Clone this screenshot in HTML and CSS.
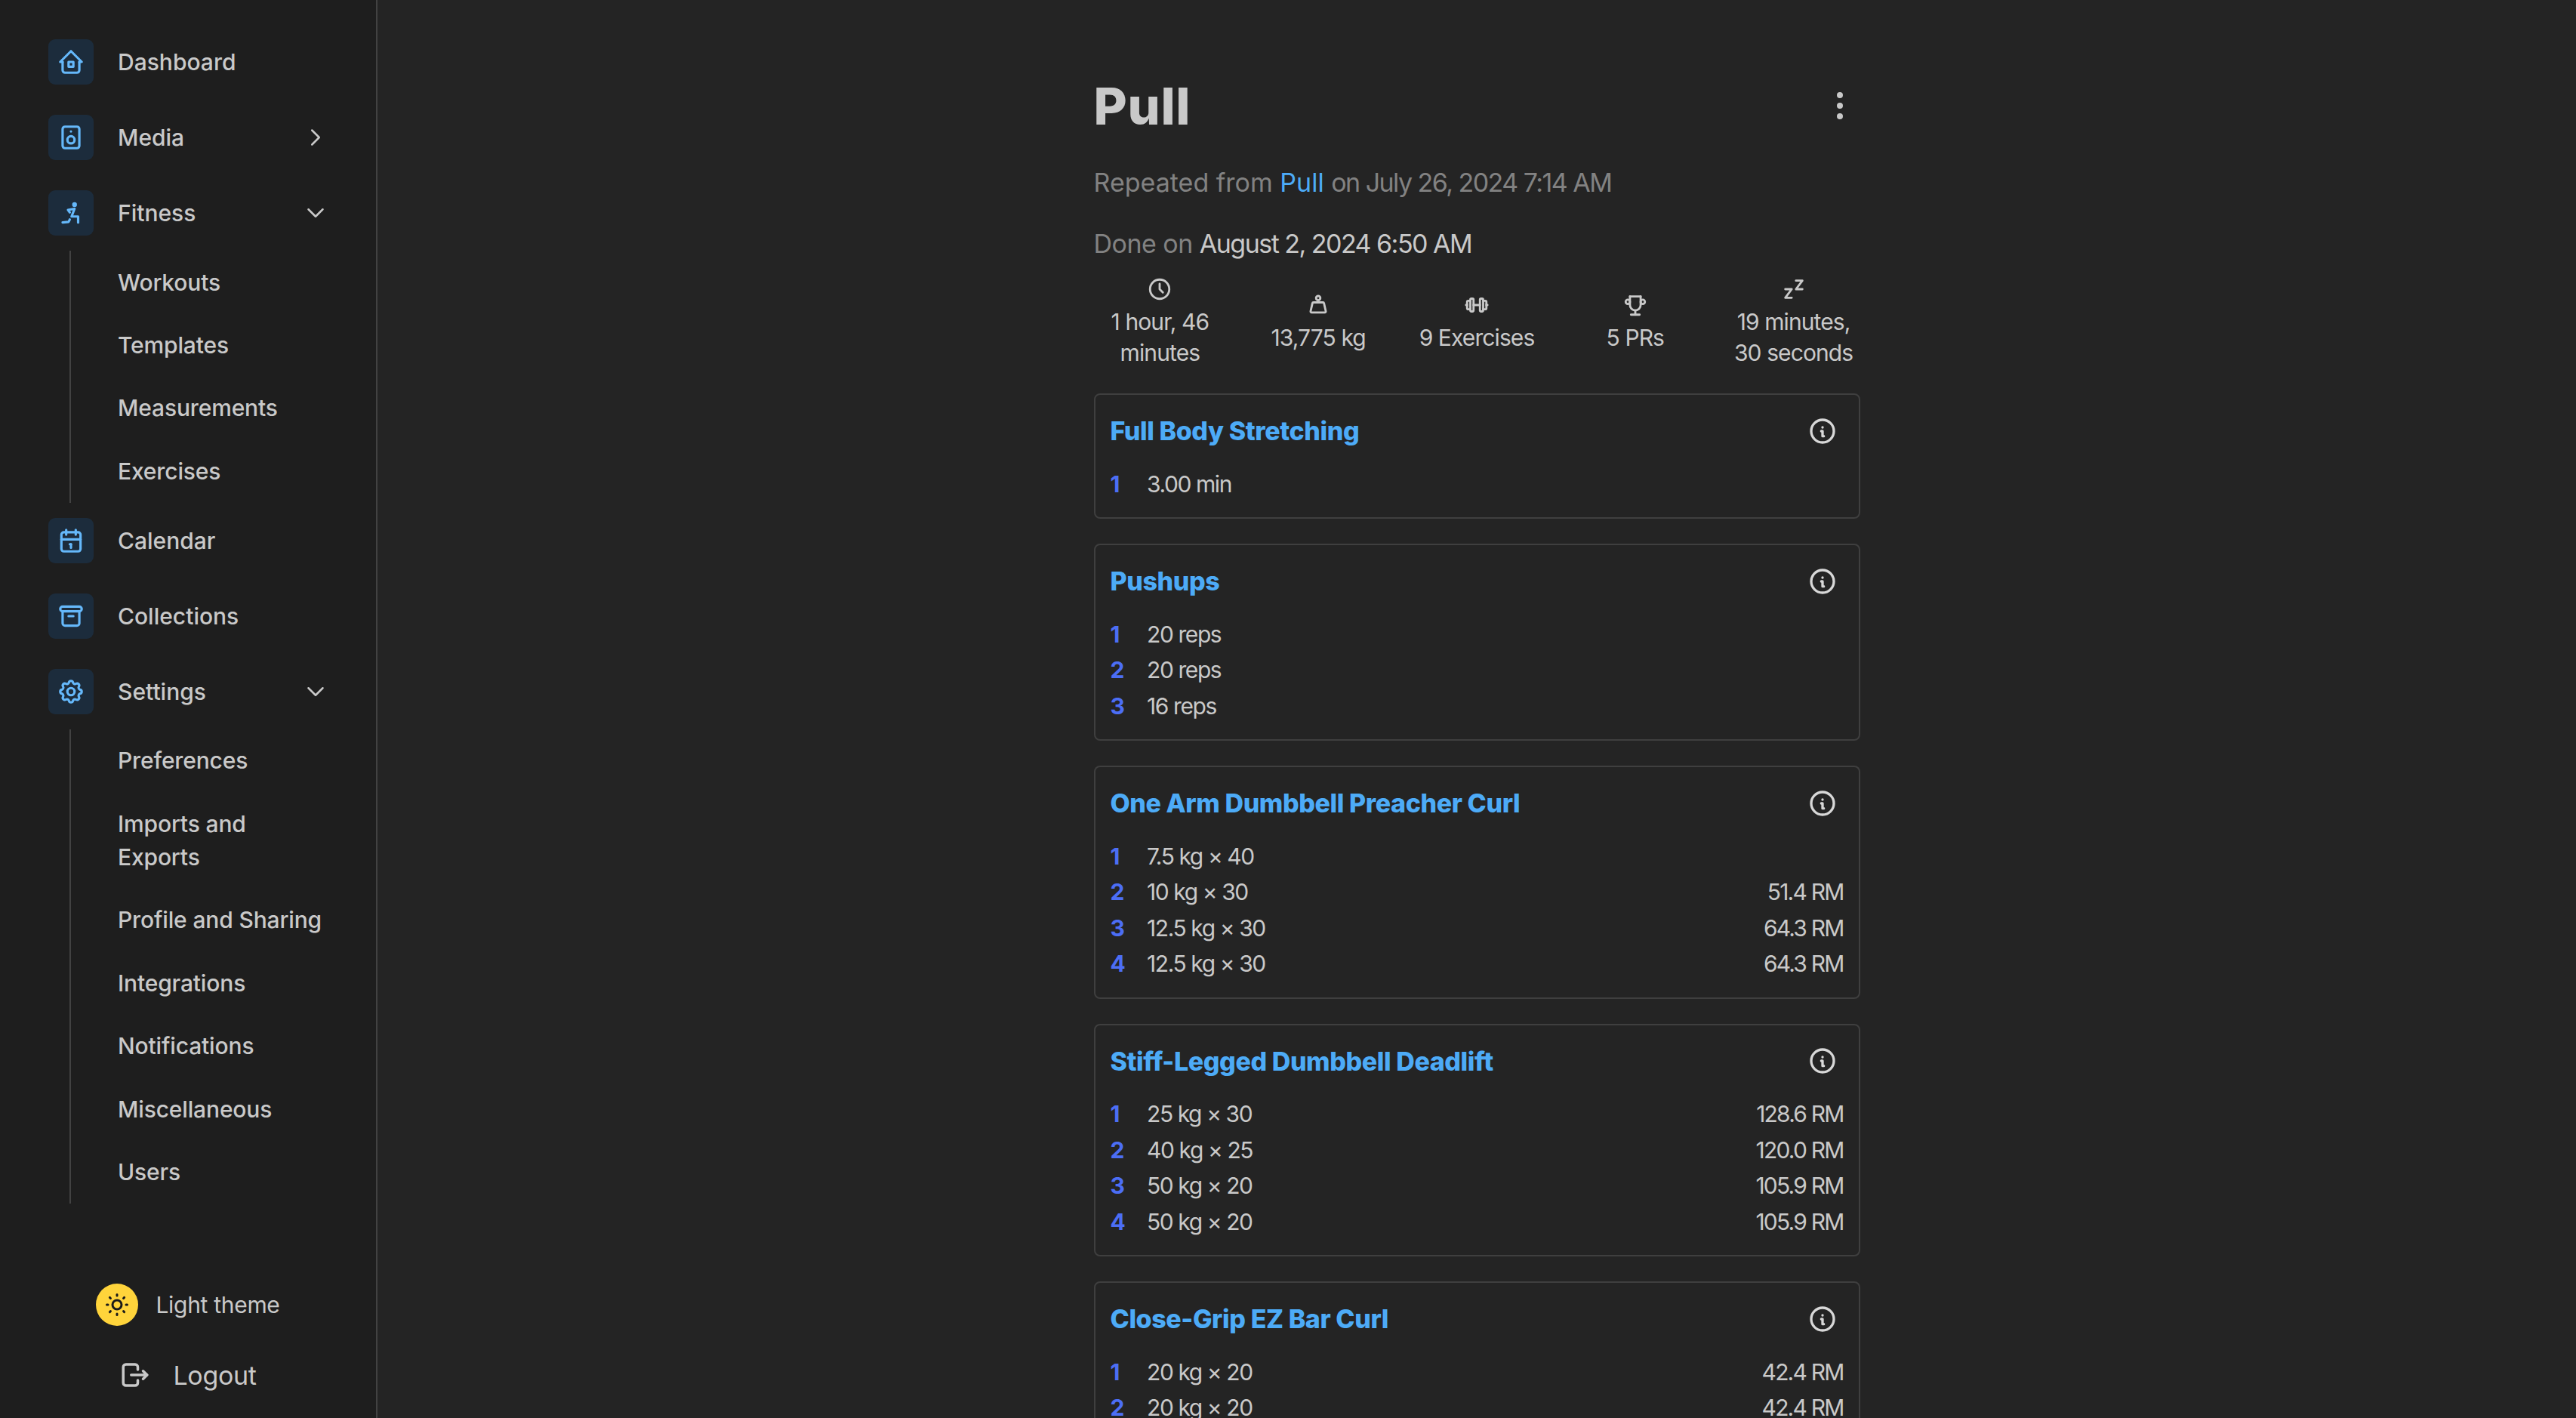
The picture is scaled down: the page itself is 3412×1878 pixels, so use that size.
FILE: index.html
```html
<!DOCTYPE html>
<html lang="en">
<head>
    <meta charset="UTF-8">
    <meta name="viewport" content="width=device-width, initial-scale=1.0">
    <title>Pull - Workout</title>
    <link rel="stylesheet" href="styles.css">
</head>
<body>
    <svg class="sprite" xmlns="http://www.w3.org/2000/svg">
        <symbol id="i-home" viewBox="0 0 24 24"><path d="M5 12l-2 0l9 -9l9 9l-2 0"/><path d="M5 12v7a2 2 0 0 0 2 2h10a2 2 0 0 0 2 -2v-7"/><path d="M10 12h4v4h-4z"/></symbol>
        <symbol id="i-speaker" viewBox="0 0 24 24"><path d="M5 5a2 2 0 0 1 2 -2h10a2 2 0 0 1 2 2v14a2 2 0 0 1 -2 2h-10a2 2 0 0 1 -2 -2z"/><path d="M9 14a3 3 0 1 0 6 0a3 3 0 1 0 -6 0"/><path d="M12 7l0 .01"/></symbol>
        <symbol id="i-stretch" viewBox="0 0 24 24"><path d="M14 5a1 1 0 1 0 2 0a1 1 0 1 0 -2 0"/><path d="M5 20l5 -.5l1 -2"/><path d="M18 20v-5h-5.5l2.5 -6.5l-5.5 1l1.5 2"/></symbol>
        <symbol id="i-calendar" viewBox="0 0 24 24"><path d="M4 7a2 2 0 0 1 2 -2h12a2 2 0 0 1 2 2v12a2 2 0 0 1 -2 2h-12a2 2 0 0 1 -2 -2v-12z"/><path d="M16 3v4"/><path d="M8 3v4"/><path d="M4 11h16"/><path d="M11 15h1"/><path d="M12 15v3"/></symbol>
        <symbol id="i-archive" viewBox="0 0 24 24"><path d="M3 6a2 2 0 0 1 2 -2h14a2 2 0 0 1 2 2a2 2 0 0 1 -2 2h-14a2 2 0 0 1 -2 -2z"/><path d="M5 8v10a2 2 0 0 0 2 2h10a2 2 0 0 0 2 -2v-10"/><path d="M10 12l4 0"/></symbol>
        <symbol id="i-settings" viewBox="0 0 24 24"><path d="M10.325 4.317c.426 -1.756 2.924 -1.756 3.35 0a1.724 1.724 0 0 0 2.573 1.066c1.543 -.94 3.31 .826 2.37 2.37a1.724 1.724 0 0 0 1.065 2.572c1.756 .426 1.756 2.924 0 3.35a1.724 1.724 0 0 0 -1.066 2.573c.94 1.543 -.826 3.31 -2.37 2.37a1.724 1.724 0 0 0 -2.572 1.065c-.426 1.756 -2.924 1.756 -3.35 0a1.724 1.724 0 0 0 -2.573 -1.066c-1.543 .94 -3.31 -.826 -2.37 -2.37a1.724 1.724 0 0 0 -1.065 -2.572c-1.756 -.426 -1.756 -2.924 0 -3.35a1.724 1.724 0 0 0 1.066 -2.573c-.94 -1.543 .826 -3.31 2.37 -2.37c1 .608 2.296 .07 2.572 -1.065z"/><path d="M9 12a3 3 0 1 0 6 0a3 3 0 1 0 -6 0"/></symbol>
        <symbol id="i-right" viewBox="0 0 24 24"><path d="M9 6l6 6l-6 6"/></symbol>
        <symbol id="i-down" viewBox="0 0 24 24"><path d="M6 9l6 6l6 -6"/></symbol>
        <symbol id="i-sun" viewBox="0 0 24 24"><path d="M8 12a4 4 0 1 0 8 0a4 4 0 1 0 -8 0"/><path d="M3 12h1m8 -9v1m8 8h1m-9 8v1m-6.4 -15.4l.7 .7m12.1 -.7l-.7 .7m0 11.4l.7 .7m-12.1 -.7l-.7 .7"/></symbol>
        <symbol id="i-logout" viewBox="0 0 24 24"><path d="M14 8v-2a2 2 0 0 0 -2 -2h-7a2 2 0 0 0 -2 2v12a2 2 0 0 0 2 2h7a2 2 0 0 0 2 -2v-2"/><path d="M9 12h12l-3 -3"/><path d="M18 15l3 -3"/></symbol>
        <symbol id="i-dots" viewBox="0 0 24 24"><path d="M11 12a1 1 0 1 0 2 0a1 1 0 1 0 -2 0"/><path d="M11 19a1 1 0 1 0 2 0a1 1 0 1 0 -2 0"/><path d="M11 5a1 1 0 1 0 2 0a1 1 0 1 0 -2 0"/></symbol>
        <symbol id="i-clock" viewBox="0 0 24 24"><path d="M3 12a9 9 0 1 0 18 0a9 9 0 0 0 -18 0"/><path d="M12 7v5l3 3"/></symbol>
        <symbol id="i-weight" viewBox="0 0 24 24"><path d="M10 5.5a2 2 0 1 0 4 0a2 2 0 1 0 -4 0"/><path d="M7.6 9.5h8.8a1 1 0 0 1 1 .8l1.7 7.5a1 1 0 0 1 -1 1.2h-12.2a1 1 0 0 1 -1 -1.2l1.7 -7.5a1 1 0 0 1 1 -.8z"/></symbol>
        <symbol id="i-barbell" viewBox="0 0 24 24"><path d="M2 12h1"/><path d="M6 8h-2a1 1 0 0 0 -1 1v6a1 1 0 0 0 1 1h2"/><path d="M6 7v10a1 1 0 0 0 1 1h1a1 1 0 0 0 1 -1v-10a1 1 0 0 0 -1 -1h-1a1 1 0 0 0 -1 1z"/><path d="M9 12h6"/><path d="M15 7v10a1 1 0 0 0 1 1h1a1 1 0 0 0 1 -1v-10a1 1 0 0 0 -1 -1h-1a1 1 0 0 0 -1 1z"/><path d="M18 8h2a1 1 0 0 1 1 1v6a1 1 0 0 1 -1 1h-2"/><path d="M22 12h-1"/></symbol>
        <symbol id="i-trophy" viewBox="0 0 24 24"><path d="M8 21l8 0"/><path d="M12 17l0 4"/><path d="M7 4l10 0"/><path d="M17 4v8a5 5 0 0 1 -10 0v-8"/><path d="M3 9a2 2 0 1 0 4 0a2 2 0 1 0 -4 0"/><path d="M17 9a2 2 0 1 0 4 0a2 2 0 1 0 -4 0"/></symbol>
        <symbol id="i-zzz" viewBox="0 0 24 24"><path d="M4 12h6l-6 8h6"/><path d="M14 4h6l-6 8h6"/></symbol>
        <symbol id="i-info" viewBox="0 0 24 24"><path d="M3 12a9 9 0 1 0 18 0a9 9 0 0 0 -18 0"/><path d="M12 9h.01"/><path d="M11 12h1v4h1"/></symbol>
    </svg>

    <aside class="sidebar">
        <nav class="nav">
            <a class="nav-row"><span class="nav-icon"><svg class="icon"><use href="#i-home"/></svg></span><span class="nav-label">Dashboard</span></a>
            <a class="nav-row"><span class="nav-icon"><svg class="icon"><use href="#i-speaker"/></svg></span><span class="nav-label">Media</span><svg class="icon chevron"><use href="#i-right"/></svg></a>
            <a class="nav-row"><span class="nav-icon"><svg class="icon"><use href="#i-stretch"/></svg></span><span class="nav-label">Fitness</span><svg class="icon chevron"><use href="#i-down"/></svg></a>
            <div class="sub-list">
                <a class="sub-row">Workouts</a>
                <a class="sub-row">Templates</a>
                <a class="sub-row">Measurements</a>
                <a class="sub-row">Exercises</a>
            </div>
            <a class="nav-row"><span class="nav-icon"><svg class="icon"><use href="#i-calendar"/></svg></span><span class="nav-label">Calendar</span></a>
            <a class="nav-row"><span class="nav-icon"><svg class="icon"><use href="#i-archive"/></svg></span><span class="nav-label">Collections</span></a>
            <a class="nav-row"><span class="nav-icon"><svg class="icon"><use href="#i-settings"/></svg></span><span class="nav-label">Settings</span><svg class="icon chevron"><use href="#i-down"/></svg></a>
            <div class="sub-list">
                <a class="sub-row">Preferences</a>
                <a class="sub-row">Imports and<br>Exports</a>
                <a class="sub-row">Profile and Sharing</a>
                <a class="sub-row">Integrations</a>
                <a class="sub-row">Notifications</a>
                <a class="sub-row">Miscellaneous</a>
                <a class="sub-row">Users</a>
            </div>
        </nav>
        <div class="sidebar-foot">
            <div class="theme-row">
                <span class="theme-dot"><svg class="icon sun"><use href="#i-sun"/></svg></span>
                <span>Light theme</span>
            </div>
            <div class="logout-row">
                <svg class="icon logout"><use href="#i-logout"/></svg>
                <span>Logout</span>
            </div>
        </div>
    </aside>

    <main class="main">
        <div class="workout">
            <div class="title-row">
                <h1>Pull</h1>
                <svg class="icon dots"><use href="#i-dots"/></svg>
            </div>
            <p class="meta repeated">Repeated from <a class="link">Pull</a> <span class="date">on July 26, 2024 7:14 AM</span></p>
            <p class="meta done">Done on <span class="date strong">August 2, 2024 6:50 AM</span></p>

            <div class="stats">
                <div class="stat"><svg class="icon"><use href="#i-clock"/></svg><span>1 hour, 46 minutes</span></div>
                <div class="stat"><svg class="icon"><use href="#i-weight"/></svg><span>13,775 kg</span></div>
                <div class="stat"><svg class="icon"><use href="#i-barbell"/></svg><span>9 Exercises</span></div>
                <div class="stat"><svg class="icon"><use href="#i-trophy"/></svg><span>5 PRs</span></div>
                <div class="stat"><svg class="icon"><use href="#i-zzz"/></svg><span>19 minutes, 30 seconds</span></div>
            </div>

            <section class="card">
                <header class="card-head"><a class="card-title">Full Body Stretching</a><svg class="icon info"><use href="#i-info"/></svg></header>
                <div class="set"><b>1</b><span>3.00 min</span></div>
            </section>

            <section class="card">
                <header class="card-head"><a class="card-title">Pushups</a><svg class="icon info"><use href="#i-info"/></svg></header>
                <div class="set"><b>1</b><span>20 reps</span></div>
                <div class="set"><b>2</b><span>20 reps</span></div>
                <div class="set"><b>3</b><span>16 reps</span></div>
            </section>

            <section class="card">
                <header class="card-head"><a class="card-title">One Arm Dumbbell Preacher Curl</a><svg class="icon info"><use href="#i-info"/></svg></header>
                <div class="set"><b>1</b><span>7.5 kg × 40</span></div>
                <div class="set"><b>2</b><span>10 kg × 30</span><em>51.4 RM</em></div>
                <div class="set"><b>3</b><span>12.5 kg × 30</span><em>64.3 RM</em></div>
                <div class="set"><b>4</b><span>12.5 kg × 30</span><em>64.3 RM</em></div>
            </section>

            <section class="card">
                <header class="card-head"><a class="card-title">Stiff-Legged Dumbbell Deadlift</a><svg class="icon info"><use href="#i-info"/></svg></header>
                <div class="set"><b>1</b><span>25 kg × 30</span><em>128.6 RM</em></div>
                <div class="set"><b>2</b><span>40 kg × 25</span><em>120.0 RM</em></div>
                <div class="set"><b>3</b><span>50 kg × 20</span><em>105.9 RM</em></div>
                <div class="set"><b>4</b><span>50 kg × 20</span><em>105.9 RM</em></div>
            </section>

            <section class="card">
                <header class="card-head"><a class="card-title">Close-Grip EZ Bar Curl</a><svg class="icon info"><use href="#i-info"/></svg></header>
                <div class="set"><b>1</b><span>20 kg × 20</span><em>42.4 RM</em></div>
                <div class="set"><b>2</b><span>20 kg × 20</span><em>42.4 RM</em></div>
            </section>
        </div>
    </main>
</body>
</html>
```

FILE: styles.css
```css
* {
    box-sizing: border-box;
}
html, body {
    height: 100%;
}
body {
    margin: 0;
    display: flex;
    overflow: hidden;
    font-family: Inter, "Noto Sans", sans-serif;
    font-size: 30px;
    color: #c9c9c9;
    background-color: #242424;
}
.sprite {
    position: absolute;
    width: 0;
    height: 0;
}
.icon {
    width: 38px;
    height: 38px;
    fill: none;
    stroke: currentColor;
    stroke-width: 2;
    stroke-linecap: round;
    stroke-linejoin: round;
    flex: none;
}

/* sidebar */
.sidebar {
    width: 500px;
    height: 100%;
    flex: none;
    display: flex;
    flex-direction: column;
    background-color: #1e1e1e;
    border-right: 2px solid #424242;
    padding-top: 32px;
}
.nav {
    padding: 0 34px 0 64px;
}
.nav-row {
    display: flex;
    align-items: center;
    padding: 20px 0;
}
.nav-icon {
    width: 60px;
    height: 60px;
    flex: none;
    display: flex;
    align-items: center;
    justify-content: center;
    border-radius: 9px;
    background-color: #1c2c3c;
    color: #65b8fa;
}
.nav-label {
    margin-left: 32px;
    font-weight: 500;
}
.chevron {
    margin-left: auto;
    margin-right: 27px;
    stroke-width: 1.6;
}
.sub-list {
    margin-left: 28px;
    padding-left: 62px;
    border-left: 2px solid #424242;
}
.sub-row {
    display: block;
    padding: 19.5px 0;
    line-height: 44.4px;
    font-weight: 500;
    letter-spacing: -0.005em;
}
.sidebar-foot {
    margin-top: auto;
    padding-bottom: 34px;
    display: flex;
    flex-direction: column;
    align-items: center;
    gap: 42px;
}
.theme-row {
    display: flex;
    align-items: center;
    gap: 23px;
    letter-spacing: -0.01em;
}
.theme-dot {
    width: 56px;
    height: 56px;
    display: flex;
    align-items: center;
    justify-content: center;
    border-radius: 50%;
    background-color: #ffd43b;
    color: #1a1a1a;
}
.sun {
    width: 36px;
    height: 36px;
}
.logout-row {
    display: flex;
    align-items: center;
    gap: 29px;
    height: 46px;
    font-size: 34px;
    letter-spacing: -0.01em;
}
.logout {
    width: 42px;
    height: 42px;
}

/* main */
.main {
    flex: 1;
    height: 100%;
    overflow: hidden;
}
.workout {
    width: 1015px;
    margin: 0 auto;
    padding-top: 96px;
}
.title-row {
    display: flex;
    align-items: center;
    justify-content: space-between;
    height: 88px;
    padding-right: 3px;
}
h1 {
    margin: 0;
    font-size: 68px;
    font-weight: 800;
    letter-spacing: 0.01em;
}
.dots {
    width: 48px;
    height: 48px;
}
.meta {
    margin: 0;
    font-size: 34px;
    line-height: 53px;
    color: #828282;
}
.date {
    letter-spacing: -0.045em;
}
.repeated {
    margin-top: 31px;
}
.done {
    margin-top: 28px;
    letter-spacing: -0.015em;
}
.link {
    color: #4dabf7;
}
.strong {
    color: #c9c9c9;
}
.stats {
    margin-top: 17px;
    display: grid;
    grid-template-columns: repeat(5, 1fr);
    column-gap: 34px;
    align-items: center;
    text-align: center;
    line-height: 41px;
    letter-spacing: -0.03em;
}
.stat {
    display: flex;
    flex-direction: column;
    align-items: center;
}
.stat .icon {
    width: 34px;
    height: 34px;
    margin-bottom: 6px;
}

/* exercise cards */
.card {
    margin-top: 33px;
    padding: 21px 20px 20.5px;
    border: 2px solid #3f3f3f;
    border-radius: 8px;
}
.card-head {
    display: flex;
    align-items: center;
    justify-content: space-between;
    height: 53px;
    margin-bottom: 20px;
}
.card-title {
    font-size: 34px;
    font-weight: 800;
    letter-spacing: -0.012em;
    color: #4dabf7;
}
.info {
    width: 40px;
    height: 40px;
    margin-right: 8px;
    color: #d8d8d8;
}
.set {
    display: flex;
    align-items: center;
    height: 47.5px;
}
.set b {
    width: 48.5px;
    flex: none;
    font-weight: 700;
    color: #4c6ef5;
}
.set span {
    letter-spacing: -0.047em;
}
.set em {
    margin-left: auto;
    font-style: normal;
    letter-spacing: -0.06em;
}
```
